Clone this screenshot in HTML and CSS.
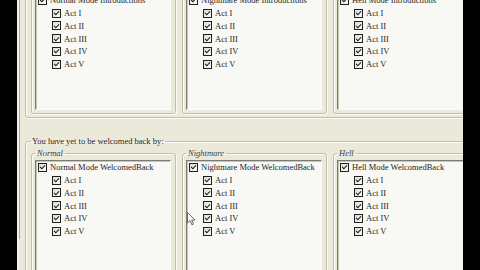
FILE: index.html
```html
<!DOCTYPE html>
<html>
<head>
<meta charset="utf-8">
<link rel="stylesheet" href="styles.css">
</head>
<body>
<div class="screen">
  <div class="gutter"></div>
  <div class="viewport">
    <div class="scroll">
      <fieldset class="group outer first">
        <legend>You have yet to be introduced to:</legend>
        <div class="cols">
          <fieldset class="group inner">
            <legend>Normal</legend>
            <div class="tree tall">
              <div class="row"><span class="cb"></span><span>Normal Mode Introductions</span></div>
              <div class="row child"><span class="cb"></span><span>Act I</span></div>
              <div class="row child"><span class="cb"></span><span>Act II</span></div>
              <div class="row child"><span class="cb"></span><span>Act III</span></div>
              <div class="row child"><span class="cb"></span><span>Act IV</span></div>
              <div class="row child"><span class="cb"></span><span>Act V</span></div>
            </div>
          </fieldset>
          <fieldset class="group inner">
            <legend>Nightmare</legend>
            <div class="tree tall">
              <div class="row"><span class="cb"></span><span>Nightmare Mode Introductions</span></div>
              <div class="row child"><span class="cb"></span><span>Act I</span></div>
              <div class="row child"><span class="cb"></span><span>Act II</span></div>
              <div class="row child"><span class="cb"></span><span>Act III</span></div>
              <div class="row child"><span class="cb"></span><span>Act IV</span></div>
              <div class="row child"><span class="cb"></span><span>Act V</span></div>
            </div>
          </fieldset>
          <fieldset class="group inner">
            <legend>Hell</legend>
            <div class="tree tall">
              <div class="row"><span class="cb"></span><span>Hell Mode Introductions</span></div>
              <div class="row child"><span class="cb"></span><span>Act I</span></div>
              <div class="row child"><span class="cb"></span><span>Act II</span></div>
              <div class="row child"><span class="cb"></span><span>Act III</span></div>
              <div class="row child"><span class="cb"></span><span>Act IV</span></div>
              <div class="row child"><span class="cb"></span><span>Act V</span></div>
            </div>
          </fieldset>
        </div>
      </fieldset>

      <fieldset class="group outer">
        <legend>You have yet to be welcomed back by:</legend>
        <div class="cols">
          <fieldset class="group inner">
            <legend>Normal</legend>
            <div class="tree">
              <div class="row"><span class="cb"></span><span>Normal Mode WelcomedBack</span></div>
              <div class="row child"><span class="cb"></span><span>Act I</span></div>
              <div class="row child"><span class="cb"></span><span>Act II</span></div>
              <div class="row child"><span class="cb"></span><span>Act III</span></div>
              <div class="row child"><span class="cb"></span><span>Act IV</span></div>
              <div class="row child"><span class="cb"></span><span>Act V</span></div>
            </div>
          </fieldset>
          <fieldset class="group inner">
            <legend>Nightmare</legend>
            <div class="tree">
              <div class="row"><span class="cb"></span><span>Nightmare Mode WelcomedBack</span></div>
              <div class="row child"><span class="cb"></span><span>Act I</span></div>
              <div class="row child"><span class="cb"></span><span>Act II</span></div>
              <div class="row child"><span class="cb"></span><span>Act III</span></div>
              <div class="row child"><span class="cb"></span><span>Act IV</span></div>
              <div class="row child"><span class="cb"></span><span>Act V</span></div>
            </div>
          </fieldset>
          <fieldset class="group inner">
            <legend>Hell</legend>
            <div class="tree">
              <div class="row"><span class="cb"></span><span>Hell Mode WelcomedBack</span></div>
              <div class="row child"><span class="cb"></span><span>Act I</span></div>
              <div class="row child"><span class="cb"></span><span>Act II</span></div>
              <div class="row child"><span class="cb"></span><span>Act III</span></div>
              <div class="row child"><span class="cb"></span><span>Act IV</span></div>
              <div class="row child"><span class="cb"></span><span>Act V</span></div>
            </div>
          </fieldset>
        </div>
      </fieldset>
    </div>
  </div>
  <div class="gutter"></div>
  <svg class="cursor" width="9" height="14" viewBox="0 0 9 14">
    <path d="M0.5 0.5 L0.5 11 L3 8.6 L4.9 12.8 L6.5 12.1 L4.7 8 L8 8 Z" fill="#fbfbf8" stroke="#6a6a66" stroke-width="1"/>
  </svg>
</div>
</body>
</html>
```

FILE: styles.css
```css
* {
  box-sizing: border-box;
}

html, body {
  margin: 0;
  padding: 0;
  background: #000;
}

.screen {
  position: relative;
  display: flex;
  width: 480px;
  height: 270px;
  overflow: hidden;
  font-family: "Liberation Serif", "Times New Roman", serif;
  font-size: 8.5px;
  color: #1e1e1e;
}

.gutter {
  flex: 1 1 0;
  background: #000;
}

.viewport {
  flex: 0 0 446px;
  height: 270px;
  overflow: hidden;
  background: #ebe9da;
  border-left: 2px solid #f4f3ec;
}

.scroll {
  height: 100%;
  border-left: 1px solid #aaa897;
  padding-top: 0;
}

.group {
  margin: 0;
  border: 1px solid #c2bfae;
  border-radius: 3px;
  box-shadow: 1px 1px 0 #fbfbf6, inset 1px 1px 0 #fbfbf6;
  min-width: 0;
}

.group legend {
  line-height: 10px;
  height: 10px;
  padding: 0 1px;
}

.outer {
  width: 459px;
  margin-left: 5px;
  padding: 2px 5px 3px 5px;
}

.outer.first {
  margin-top: -31px;
  margin-bottom: 18px;
}

.inner {
  padding: 2px 4px 3px 3px;
}

.inner legend {
  font-style: italic;
  color: #3a3a3a;
  padding: 0 2px;
}

.cols {
  display: grid;
  grid-template-columns: repeat(3, 145px);
  column-gap: 6px;
}

.tree {
  height: 130px;
  background: #f8f8f5;
  border-top: 1px solid #7b7b72;
  border-left: 1px solid #7b7b72;
  border-right: 1px solid #fdfdfa;
  border-bottom: 1px solid #fdfdfa;
  box-shadow: inset 1px 1px 0 #c9c6b8;
  padding: 0 0 0 2px;
}

.tree.tall {
  height: 117px;
}

.row {
  display: flex;
  align-items: center;
  gap: 3px;
  height: 12.75px;
  white-space: nowrap;
}

.row.child {
  padding-left: 14px;
}

.cb {
  position: relative;
  flex: 0 0 9px;
  width: 9px;
  height: 9px;
  border: 1px solid #202020;
  background: linear-gradient(135deg, #dcdcd4, #fbfbf8);
}

.cb::after {
  content: "";
  position: absolute;
  left: 2.3px;
  top: 0.4px;
  width: 2px;
  height: 4.2px;
  border: solid #111;
  border-width: 0 1.5px 1.5px 0;
  transform: rotate(45deg);
}

.cursor {
  position: absolute;
  left: 187px;
  top: 212px;
}
```
